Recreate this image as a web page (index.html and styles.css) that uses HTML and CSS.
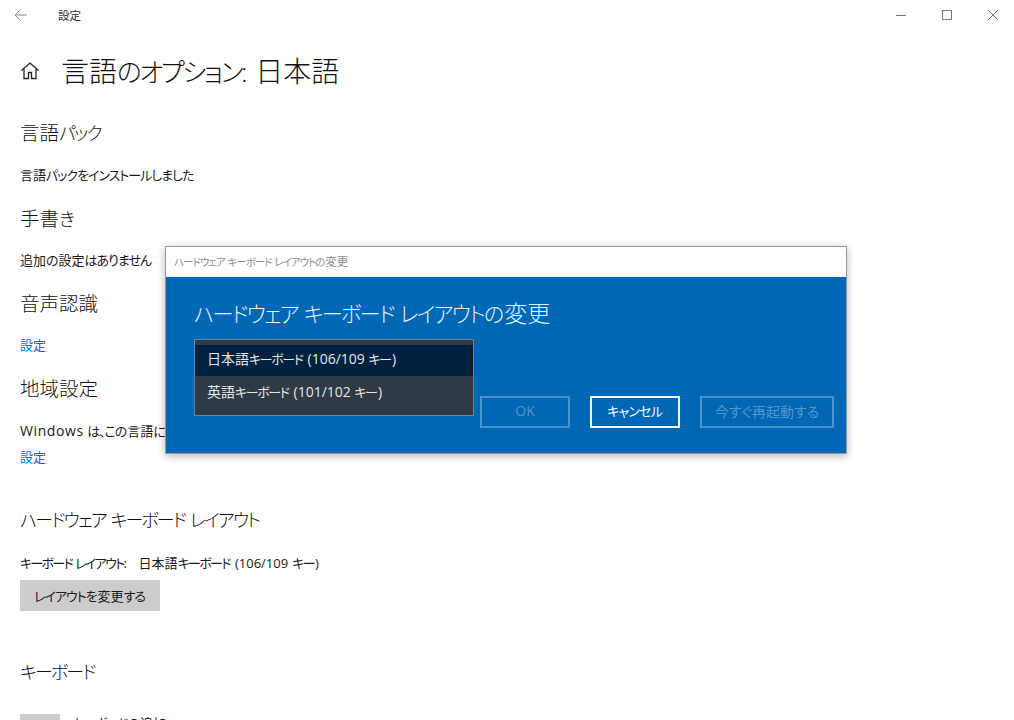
FILE: index.html
```html
<!DOCTYPE html>
<html lang="ja">
<head>
<meta charset="utf-8">
<title>設定</title>
<link rel="stylesheet" href="styles.css">
</head>
<body>
<header class="titlebar">
  <svg class="back" width="13" height="12" viewBox="0 0 13 12"><path d="M6.500.500 1 6l5.500 5.500M1 6h12" fill="none" stroke="#8a8a8a" stroke-width="1"/></svg>
  <span class="app-name">設定</span>
  <div class="win-controls">
    <svg width="12" height="12" viewBox="0 0 12 12"><path d="M1 6.500h10" stroke="#777" fill="none"/></svg>
    <svg width="12" height="12" viewBox="0 0 12 12"><rect x="1.500" y="1.500" width="9" height="9" stroke="#777" fill="none"/></svg>
    <svg width="12" height="12" viewBox="0 0 12 12"><path d="M1 1l10 10M11 1 1 11" stroke="#777" fill="none"/></svg>
  </div>
</header>
<main class="content">
  <div class="page-title">
    <svg class="home" width="20" height="20" viewBox="0 0 20 20"><path d="M1.500 9.500 10 2l8.500 7.500M4 8v9.500h4.500v-6h3v6H16V8" fill="none" stroke="#222" stroke-width="1.300"/></svg>
    <h1>言語<span class="k">のオプション:</span> 日本語</h1>
  </div>
  <h2 class="s1">言語<span class="k">パック</span></h2>
  <p class="t4">言語<span class="k">パックをインストールしました</span></p>
  <h2 class="s2">手書<span class="k">き</span></h2>
  <p class="t1">追加<span class="k">の</span>設定<span class="k">はありません</span></p>
  <h2 class="s2">音声認識</h2>
  <p class="t1"><a class="link">設定</a></p>
  <h2 class="s2">地域設定</h2>
  <p class="t4"><span class="latin">Windows</span> <span class="k">は、この</span>言語<span class="k">に</span>基<span class="k">づいて</span>地域書式<span class="k">を</span>設定<span class="k">します</span></p>
  <p class="t2"><a class="link">設定</a></p>
  <h2 class="s3"><span class="k">ハードウェア キーボード レイアウト</span></h2>
  <p class="t3"><span class="k">キーボード レイアウト:</span>&nbsp;&nbsp; 日本語<span class="k">キーボード</span> (106/109 <span class="k">キー</span>)</p>
  <button class="layout-btn"><span class="k">レイアウトを</span>変更<span class="k">する</span></button>
  <h2 class="s4"><span class="k">キーボード</span></h2>
  <div class="kb-row"><span class="kb-swatch"></span><span class="kb-label"><span class="k">キーボードの</span>追加</span></div>
</main>
<section class="dialog">
  <div class="dialog-caption"><span class="k">ハードウェア キーボード レイアウトの</span>変更</div>
  <div class="dialog-body">
    <h3><span class="k">ハードウェア キーボード レイアウトの</span>変更</h3>
    <div class="dialog-row">
      <ul class="list">
        <li class="selected">日本語<span class="k">キーボード</span> (106/109 <span class="k">キー</span>)</li>
        <li>英語<span class="k">キーボード</span> (101/102 <span class="k">キー</span>)</li>
      </ul>
      <div class="actions">
        <button class="dbtn ok" disabled>OK</button>
        <button class="dbtn cancel"><span class="k">キャンセル</span></button>
        <button class="dbtn restart" disabled>今すぐ再起動する</button>
      </div>
    </div>
  </div>
</section>
</body>
</html>
```
FILE: styles.css
```css
* { box-sizing: border-box; }
html, body { margin: 0; height: 720px; overflow: hidden; }
body {
  background: #fff;
  color: #1a1a1a;
  font-family: "Open Sans", "Noto Sans CJK JP", sans-serif;
  font-feature-settings: "palt";
  font-size: 14px;
  position: relative;
}
.k { font-size: .92em; letter-spacing: -.1em; word-spacing: .1em; margin-right: .1em; }
.latin { font-size: 14px; letter-spacing: .6px; }
.titlebar { display: flex; align-items: center; height: 30px; padding-left: 14px; }
.app-name { margin-left: 31px; font-size: 11.500px; color: #333; }
.win-controls { margin-left: auto; margin-right: 15px; display: flex; gap: 34px; }
.content { padding-left: 20px; }
.page-title { display: flex; align-items: center; height: 42px; margin-top: 20px; }
.home { flex: none; }
h1 { margin: 0 0 0 21px; font-size: 28px; font-weight: 300; line-height: 42px; color: #111; word-spacing: 3px; }
h1 .k { letter-spacing: -.09em; margin-right: 0; }
h2 { margin: 0; font-size: 19.500px; font-weight: 300; line-height: 28px; color: #111; }
p { margin: 0; font-size: 13px; line-height: 22px; white-space: nowrap; }
p .k, .layout-btn .k, .kb-label .k { font-size: 1em; letter-spacing: -.08em; margin-right: .08em; }
.s1 { margin-top: 27px; }
.t1 { margin-top: 16px; }
.t2 { margin-top: 4px; }
.t3 { margin-top: 18px; word-spacing: .75px; }
.t3 .k { letter-spacing: -.13em; }
.t4 { margin-top: 17px; }
.s2 { margin-top: 19px; }
.s3 { margin-top: 38px; }
.link { color: #0070b8; }
.layout-btn {
  display: block; width: 140px; height: 31px; margin-top: 6px; padding: 0;
  border: 0; background: #ccc; color: #1a1a1a;
  font: inherit; font-size: 13px; font-feature-settings: inherit;
}
.s4 { margin-top: 47px; }
.kb-row { display: flex; gap: 12px; margin-top: 28px; line-height: 20px; font-size: 13px; }
.kb-swatch { width: 40px; height: 40px; background: #ccc; }
.kb-label { margin-top: -1px; }
.dialog {
  position: absolute; left: 165px; top: 246px; width: 682px; height: 208px;
  border: 1px solid #9a9a9a;
  box-shadow: 0 2px 8px rgba(0,0,0,.3);
  display: flex; flex-direction: column;
}
.dialog-caption {
  height: 30px; flex: none; background: #fff; color: #8e8e8e;
  font-size: 11.500px; line-height: 30px; padding-left: 8px;
}
.dialog-body { flex: 1; background: #0067b5; padding: 21px 12px 0 28px; color: #fff; }
h3 { margin: 0; font-size: 23px; font-weight: 300; line-height: 30px; color: #e9f2f9; }
h3 .k { letter-spacing: -.08em; margin-right: .08em; }
.dialog-row { display: flex; margin-top: 10px; }
.list {
  list-style: none; margin: 0; padding: 5px 0 5px; width: 280px; height: 77px; flex: none;
  background: #2f3a45; border: 1px solid #6486a3; color: #e6e6e6;
}
.list li { height: 33px; line-height: 31px; padding-left: 12px; }
.list .selected { height: 31px; line-height: 28px; background: #00213f; }
.actions { display: flex; gap: 20px; margin: 57px 0 0 6px; }
.dbtn {
  height: 32px; width: 90px; padding: 0 0 3px; background: transparent;
  border: 2px solid #4c93cb; color: #5596cb;
  font: inherit; font-feature-settings: inherit;
}
.dbtn .k { letter-spacing: -.05em; margin-right: .05em; }
.cancel { border-color: #fff; color: #fff; }
.restart { width: 134px; }
```
